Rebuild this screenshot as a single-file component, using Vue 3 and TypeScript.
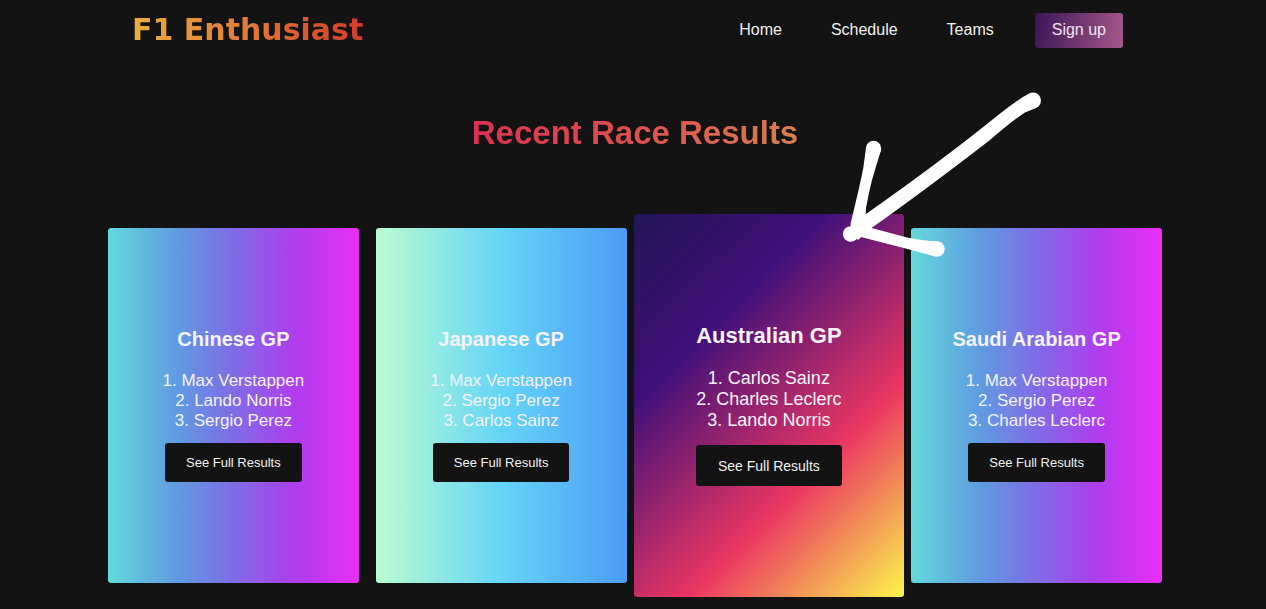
<script setup lang="ts">
interface Race {
  name: string
  theme: 'violet' | 'aqua' | 'sunset'
  podium: string[]
  active?: boolean
}

const links: string[] = ['Home', 'Schedule', 'Teams']

const races: Race[] = [
  { name: 'Chinese GP', theme: 'violet', podium: ['Max Verstappen', 'Lando Norris', 'Sergio Perez'] },
  { name: 'Japanese GP', theme: 'aqua', podium: ['Max Verstappen', 'Sergio Perez', 'Carlos Sainz'] },
  { name: 'Australian GP', theme: 'sunset', podium: ['Carlos Sainz', 'Charles Leclerc', 'Lando Norris'], active: true },
  { name: 'Saudi Arabian GP', theme: 'violet', podium: ['Max Verstappen', 'Sergio Perez', 'Charles Leclerc'] },
]
</script>

<template>
  <div class="page">
    <header class="topbar">
      <a class="logo" href="#">F1 Enthusiast</a>
      <nav class="nav">
        <a v-for="link in links" :key="link" class="nav-link" href="#">{{ link }}</a>
        <button class="signup" type="button">Sign up</button>
      </nav>
    </header>

    <main class="results">
      <h1 class="heading">Recent Race Results</h1>
      <div class="cards">
        <article
          v-for="race in races"
          :key="race.name"
          class="card"
          :class="[race.theme, { active: race.active }]"
        >
          <h2 class="race-name">{{ race.name }}</h2>
          <ol class="podium">
            <li v-for="(driver, i) in race.podium" :key="driver">{{ i + 1 }}. {{ driver }}</li>
          </ol>
          <button class="more" type="button">See Full Results</button>
          <svg v-if="race.active" class="arrow" viewBox="840 90 206 170" aria-hidden="true">
            <circle cx="1033" cy="100.500" r="8" />
            <path d="M1028 94.200 Q1020 98 997 116 Q940 162 866 214 L850 228 L858 240 L870 229 Q920 194 990 140 Q1012 121 1025 112.500 L1036 108 Z" />
            <circle cx="873.500" cy="148.500" r="7.700" />
            <path d="M865.900 148.500 Q864 168 859.300 187 L850.500 224 L852 238 L865 230 L866 208 Q869 192 872 180 Q876 166 881.100 150 Z" />
            <circle cx="937" cy="249" r="7.700" />
            <path d="M866 226.500 L907 237.500 Q925 241 938 241.300 L935.500 256.600 Q915 251 900 247 Q880 242 861 237 L852 241 Z" />
            <circle cx="850.700" cy="234" r="7.800" />
          </svg>
        </article>
      </div>
    </main>
  </div>
</template>

<style>
body {
  margin: 0;
  background: #131313;
}
</style>

<style scoped>
.page {
  min-height: 100vh;
  box-sizing: border-box;
  overflow: hidden;
  background: #131313;
  color: #f6f3fa;
  font-family: 'Liberation Sans', Arial, sans-serif;
  font-size: 16px;
}

.topbar {
  display: flex;
  align-items: center;
  justify-content: space-between;
  height: 60px;
  padding: 0 143px 0 132px;
}

.logo {
  font-family: 'DejaVu Sans', sans-serif;
  font-size: 30px;
  font-weight: bold;
  line-height: 36px;
  text-decoration: none;
  color: transparent;
  background: linear-gradient(90deg, #e8b040, #e07a38 50%, #d43a2c);
  background-clip: text;
}

.nav {
  display: flex;
  align-items: center;
}

.nav-link {
  margin-right: 49px;
  color: #f1f1f1;
  text-decoration: none;
}

.nav-link:nth-last-child(2) {
  margin-right: 41px;
}

.signup {
  height: 35px;
  padding: 0 17px;
  border: 0;
  border-radius: 3px;
  background: linear-gradient(100deg, #3b1556, #a6588a);
  color: #f0e6f3;
  font: inherit;
}

.heading {
  width: fit-content;
  margin: 53px auto 0;
  padding-left: 4px;
  color: transparent;
  background: linear-gradient(100deg, #de2f52, #dd5350 55%, #d78052);
  background-clip: text;
  font-size: 33px;
  line-height: 40px;
}

.cards {
  display: grid;
  grid-template-columns: repeat(4, 1fr);
  gap: 17px;
  padding: 75px 104px 27px 108px;
}

.card {
  display: flex;
  flex-direction: column;
  align-items: center;
  justify-content: center;
  box-sizing: border-box;
  min-height: 355px;
  padding-bottom: 2px;
  border-radius: 3px;
}

.violet {
  background: linear-gradient(90deg, #63dadb, #5f9ce1 27%, #7f6ce6 50%, #b03cee 75%, #e92ff7);
}

.aqua {
  background: linear-gradient(90deg, #bbfcd0, #64d5f7 50%, #4d9bf8);
}

.sunset {
  background: linear-gradient(135deg, #231557, #40107a 29%, #eb3662 67%, #fbf64c);
}

.race-name {
  margin: 0 0 20px;
  font-size: 20px;
  line-height: 23px;
}

.podium {
  margin: 0 0 12px;
  padding: 0;
  list-style: none;
  text-align: center;
  font-size: 17px;
  line-height: 20px;
}

.more {
  height: 39px;
  padding: 0 21px;
  border: 0;
  border-radius: 3px;
  background: #131313;
  color: #f1f1f1;
  font: inherit;
  font-size: 13px;
}

.active {
  position: relative;
  z-index: 1;
  margin: -14px -10px;
}

.active .race-name {
  font-size: 22px;
  line-height: 25px;
}

.active .podium {
  margin-bottom: 14px;
  font-size: 18px;
  line-height: 21px;
}

.active .more {
  height: 41px;
  padding: 0 22px;
  font-size: 14px;
}

.arrow {
  position: absolute;
  top: -124px;
  left: 206px;
  width: 206px;
  height: 170px;
  fill: #fff;
  pointer-events: none;
}
</style>
